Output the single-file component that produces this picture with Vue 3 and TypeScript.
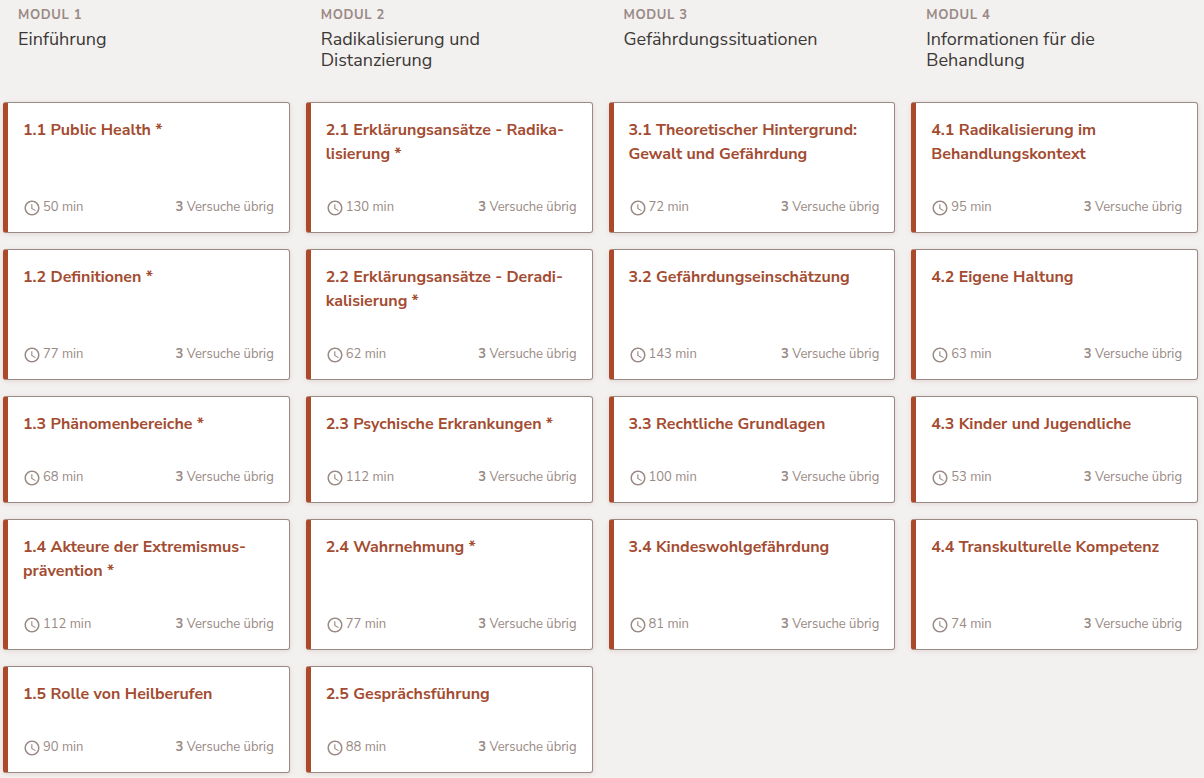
<script setup lang="ts">
interface Lesson {
  title: string
  minutes: number
}

interface CourseModule {
  label: string
  name: string
  lessons: Lesson[]
}

const attemptsLeft = 3

const modules: CourseModule[] = [
  {
    label: 'Modul 1',
    name: 'Einführung',
    lessons: [
      { title: '1.1 Public Health *', minutes: 50 },
      { title: '1.2 Definitionen *', minutes: 77 },
      { title: '1.3 Phänomenbereiche *', minutes: 68 },
      { title: '1.4 Akteure der Extremismus\u00ADprävention *', minutes: 112 },
      { title: '1.5 Rolle von Heilberufen', minutes: 90 },
    ],
  },
  {
    label: 'Modul 2',
    name: 'Radikalisierung und Distanzierung',
    lessons: [
      { title: '2.1 Erklärungsansätze - Radika\u00ADlisierung *', minutes: 130 },
      { title: '2.2 Erklärungsansätze - Deradi\u00ADkalisierung *', minutes: 62 },
      { title: '2.3 Psychische Erkrankungen *', minutes: 112 },
      { title: '2.4 Wahrnehmung *', minutes: 77 },
      { title: '2.5 Gesprächsführung', minutes: 88 },
    ],
  },
  {
    label: 'Modul 3',
    name: 'Gefährdungssituationen',
    lessons: [
      { title: '3.1 Theoretischer Hintergrund: Gewalt und Gefährdung', minutes: 72 },
      { title: '3.2 Gefährdungseinschätzung', minutes: 143 },
      { title: '3.3 Rechtliche Grundlagen', minutes: 100 },
      { title: '3.4 Kindeswohlgefährdung', minutes: 81 },
    ],
  },
  {
    label: 'Modul 4',
    name: 'Informationen für die Behandlung',
    lessons: [
      { title: '4.1 Radikalisierung im Behandlungskontext', minutes: 95 },
      { title: '4.2 Eigene Haltung', minutes: 63 },
      { title: '4.3 Kinder und Jugendliche', minutes: 53 },
      { title: '4.4 Transkulturelle Kompetenz', minutes: 74 },
    ],
  },
]
</script>

<template>
  <main class="modules">
    <section v-for="mod in modules" :key="mod.label" class="module">
      <header class="module-head">
        <p class="module-label">{{ mod.label }}</p>
        <h2 class="module-name">{{ mod.name }}</h2>
      </header>
      <article v-for="lesson in mod.lessons" :key="lesson.title" class="card">
        <h3 class="card-title">
          <a href="#" class="card-link">{{ lesson.title }}</a>
        </h3>
        <footer class="card-meta">
          <span class="duration">
            <svg class="clock" viewBox="0 0 24 24" aria-hidden="true">
              <path d="M11.99 2C6.47 2 2 6.48 2 12s4.47 10 9.99 10C17.52 22 22 17.52 22 12S17.52 2 11.99 2zM12 20c-4.42 0-8-3.58-8-8s3.58-8 8-8 8 3.58 8 8-3.58 8-8 8zm.5-13H11v6l5.25 3.15.75-1.23-4.5-2.67z" />
            </svg>
            <span>{{ lesson.minutes }} min</span>
          </span>
          <span><b class="count">{{ attemptsLeft }}</b> Versuche übrig</span>
        </footer>
      </article>
    </section>
  </main>
</template>

<style>
body {
  margin: 0;
  background: #f3f1f0;
}
</style>

<style scoped>
.modules {
  display: grid;
  grid-template-columns: repeat(4, minmax(0, 1fr));
  grid-template-rows: repeat(6, auto);
  gap: 16px;
  padding: 5px 6px 4px 3px;
  font-family: "Nunito Sans", Nunito, "Open Sans", "Noto Sans", sans-serif;
  color: #3c3836;
}

.module {
  display: grid;
  grid-row: span 6;
  grid-template-rows: subgrid;
}

.module-head {
  padding: 0 15px 15px;
}

.module-label {
  margin: 0 0 4px;
  font-size: 13px;
  line-height: 20px;
  font-weight: 700;
  letter-spacing: 0.05em;
  text-transform: uppercase;
  color: #998a85;
}

.module-name {
  margin: 0;
  font-size: 18px;
  line-height: 21px;
  font-weight: 400;
}

.card {
  display: flex;
  flex-direction: column;
  justify-content: space-between;
  gap: 31px;
  padding: 15px 15px 14px;
  background: #fff;
  border: 1px solid #998a85;
  border-left: 5px solid #ab4a2b;
  border-radius: 3px;
  box-shadow: 0 1px 5px rgba(120, 70, 50, 0.15);
}

.card-title {
  margin: 0;
  font-size: 16px;
  line-height: 24px;
  font-weight: 700;
}

.card-link {
  color: #a34c31;
  text-decoration: none;
}

.card-meta {
  display: flex;
  justify-content: space-between;
  font-size: 13px;
  line-height: 21px;
  color: #998a85;
}

.duration {
  display: flex;
  align-items: center;
  gap: 2px;
}

.clock {
  width: 18px;
  height: 18px;
  fill: currentColor;
}

.count {
  font-weight: 700;
}
</style>
